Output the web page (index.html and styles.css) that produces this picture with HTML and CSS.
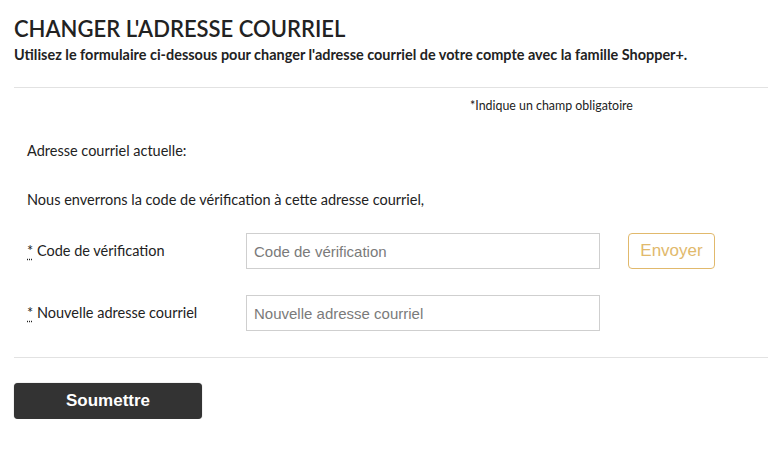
FILE: index.html
```html
<!DOCTYPE html>
<html lang="fr">
<head>
<meta charset="utf-8">
<title>Changer l'adresse courriel</title>
<link rel="stylesheet" href="styles.css">
</head>
<body>
<main class="page">
  <h1 class="title">CHANGER L'ADRESSE COURRIEL</h1>
  <p class="subtitle">Utilisez le formulaire ci-dessous pour changer l'adresse courriel de votre compte avec la famille Shopper+.</p>
  <hr class="divider">
  <p class="required-note">*Indique un champ obligatoire</p>
  <form class="form">
    <p class="info current">Adresse courriel actuelle:</p>
    <p class="info notice">Nous enverrons la code de vérification à cette adresse courriel,</p>
    <div class="row">
      <label class="label" for="code"><abbr class="req" title="obligatoire">*</abbr> Code de vérification</label>
      <input class="field" id="code" type="text" placeholder="Code de vérification">
      <button class="send" type="button">Envoyer</button>
    </div>
    <div class="row">
      <label class="label" for="email"><abbr class="req" title="obligatoire">*</abbr> Nouvelle adresse courriel</label>
      <input class="field" id="email" type="text" placeholder="Nouvelle adresse courriel">
    </div>
    <hr class="divider bottom">
    <button class="submit" type="submit">Soumettre</button>
  </form>
</main>
</body>
</html>
```
FILE: styles.css
```css
html, body {
  margin: 0;
  padding: 0;
  background: #fff;
}
body {
  font-family: Lato, "Liberation Sans", sans-serif;
  color: #222;
}
.page {
  padding: 16px 16px 0 14px;
}
.title {
  margin: 0;
  font-size: 22px;
  line-height: 26px;
  font-weight: 600;
  color: #222;
}
.subtitle {
  margin: 2px 0 0;
  font-size: 14.45px;
  line-height: 22px;
  font-weight: 700;
  color: #222;
}
.divider {
  border: 0;
  border-top: 1px solid #e2e2e2;
  margin: 21px 0 0;
}
.required-note {
  margin: 10px 0 0 456px;
  font-size: 12.4px;
  line-height: 16px;
  color: #222;
}
.form {
  display: flex;
  flex-direction: column;
}
.info {
  margin: 0;
  padding-left: 13px;
  font-size: 14.5px;
  line-height: 20px;
}
.current {
  margin-top: 27px;
}
.notice {
  margin-top: 29px;
}
.row {
  display: flex;
  align-items: center;
  margin-top: 23px;
}
.row + .row {
  margin-top: 26px;
}
.label {
  width: 219px;
  padding-left: 13px;
  font-size: 14.5px;
  line-height: 20px;
  color: #222;
  position: relative;
  top: 0;
}
.req {
  text-decoration: underline dotted;
  text-underline-offset: 3px;
  cursor: help;
}
.field {
  box-sizing: border-box;
  width: 354px;
  height: 36px;
  border: 1px solid #cfcfcf;
  padding: 0 7px;
  font-family: "Liberation Sans", Arial, sans-serif;
  font-size: 15px;
  color: #333;
  background: #fff;
  outline: none;
}
.field::placeholder {
  color: #7a7a7a;
}
.send {
  box-sizing: border-box;
  margin-left: 28px;
  width: 87px;
  height: 36px;
  border: 1px solid #e1b96c;
  border-radius: 4px;
  background: #fff;
  color: #e1b96c;
  font-family: "Liberation Sans", Arial, sans-serif;
  font-size: 17px;
  padding: 0;
}
.divider.bottom {
  margin-top: 26px;
}
.submit {
  box-sizing: border-box;
  margin-top: 25px;
  width: 188px;
  height: 36px;
  border: 0;
  border-radius: 4px;
  background: #333;
  color: #fff;
  font-family: "Liberation Sans", Arial, sans-serif;
  font-size: 17px;
  font-weight: 700;
  box-shadow: 0 0 1px rgba(0,0,0,0.5);
  padding: 0;
}
```
